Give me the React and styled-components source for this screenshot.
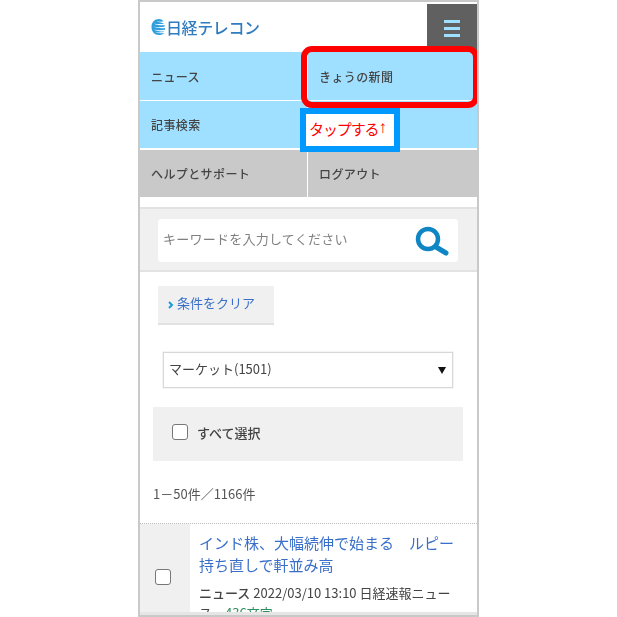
import React from "react";
import styled, { createGlobalStyle } from "styled-components";

const Global = createGlobalStyle`
  html, body { margin: 0; padding: 0; background: #fff; }
  body { font-family: "Noto Sans CJK JP", "Open Sans", sans-serif; overflow: hidden; height: 617px; }
  * { box-sizing: border-box; }
`;
const Phone = styled.div`
  position: relative; width: 341px; height: 617px; margin-left: 138px;
  border: 2px solid #c9c9c9; background: #fff; overflow: hidden;
`;
const Page = styled.div`filter: blur(0.4px); height: 100%;`;
const Header = styled.header`
  display: flex; justify-content: space-between; height: 50px; padding: 2px 0 0 11px;
`;
const Logo = styled.div`
  display: flex; align-items: center; gap: 1px; height: 48px; padding-bottom: 3px;
  color: #2f7cc0; font-size: 16px; font-weight: 500; letter-spacing: -0.4px;
`;
const MenuButton = styled.div`
  width: 50px; height: 48px; background: #606060; display: flex; flex-direction: column;
  justify-content: center; align-items: center; gap: 4px;
`;
const MenuBar = styled.span`width: 16px; height: 3px; background: #9fdfff;`;
const NavRow = styled.div`
  display: grid; grid-template-columns: 167px 1fr; height: ${p => p.$h}px; margin-bottom: ${p => p.$mb}px;
  gap: 1px; background: #fff;
`;
const NavCell = styled.div`
  background: ${p => (p.$gray ? "#c9c9c9" : "#9fdfff")}; color: #444; font-size: 12px; font-weight: 500;
  display: flex; align-items: center; padding-left: 11px; letter-spacing: 0.4px;
`;
const SearchBand = styled.div`
  margin-top: 10px; background: #f0f0f0; border-top: 2px solid #e2e2e2; border-bottom: 2px solid #e2e2e2;
  height: 65px; padding: 10px 18px 0 18px;
`;
const SearchBox = styled.div`
  width: 300px; height: 43px; background: #fff; border-radius: 4px; display: flex;
  align-items: center; justify-content: space-between; padding: 0 9px 0 5px;
  color: #808080; font-size: 13px; letter-spacing: 0.25px;
`;
const Lifted = styled.span`transform: translateY(-2px);`;
const Clear = styled.div`
  margin: 14px 0 0 18px; width: 116px; height: 39px; background: #f0f0f0; border-bottom: 2px solid #e2e2e2;
  display: flex; align-items: center; gap: 3px; padding-left: 10px; color: #3a6fc9; font-size: 13px;
`;
const Select = styled.div`
  margin: 27px 0 0 23px; width: 290px; height: 36px; border: 1px solid #d8d8d8; box-shadow: 0 0 0 0.5px #e8e8e8;
  display: flex; align-items: center; justify-content: space-between; padding: 0 6px 0 5px;
  color: #444; font-size: 13px;
`;
const Arrow = styled.span`
  width: 0; height: 0; border-left: 4px solid transparent; border-right: 4px solid transparent; border-top: 7px solid #111;
`;
const SelectAll = styled.div`
  margin: 19px 0 0 13px; width: 310px; height: 54px; background: #f0f0f0; display: flex; align-items: center;
  gap: 9px; padding: 0 0 4px 19px; color: #444; font-size: 13px; font-weight: 500;
`;
const Box = styled.span`
  width: 16px; height: 16px; border: 1px solid #777; border-radius: 3px; background: #fff; flex: none;
`;
const Count = styled.div`margin: 23px 0 0 13px; height: 39px; line-height: 20px; color: #555; font-size: 13px;`;
const Article = styled.article`
  display: grid; grid-template-columns: 50px 1fr; height: 89px; border-top: 1px dotted #bbb; overflow: hidden;
`;
const CheckCol = styled.div`
  background: #f0f0f0; display: flex; align-items: center; justify-content: center; padding: 6px 4px 0 0;
`;
const Body = styled.div`padding: 8px 18px 0 9px;`;
const Title = styled.div`color: #3a6fc9; font-size: 15px; line-height: 22px;`;
const Meta = styled.div`margin-top: 7px; color: #444; font-size: 13px; line-height: 20px;`;
const Strong = styled.b`font-weight: 500;`;
const Green = styled.span`color: #2f8f5f;`;
const BottomBar = styled.div`height: 3px; background: #e6e6e6;`;
const RedBox = styled.div`
  position: absolute; left: 161px; top: 44px; width: 178px; height: 62px; border: 6px solid #f00; border-radius: 11px;
`;
const TapNote = styled.div`
  position: absolute; left: 160px; top: 106px; width: 100px; height: 44px; border: 6px solid #0099ff; background: #fff;
  color: #f00; font-size: 15px; display: flex; align-items: center; padding: 0 0 4px 3px; letter-spacing: -1.1px;
  white-space: nowrap;
`;
const UpArrow = styled.span`font-family: "Liberation Sans", sans-serif; font-size: 17px; letter-spacing: 0;`;

const Globe = () => (
  <svg width="14" height="18" viewBox="0 0 14 18">
    <path d="M8 1C3.500 1 .5 4.500 .5 9s3 8 7.500 8c2 0 4-.6 5.500-1.800C10 15.500 6 15 4 14c3 .6 7 .6 9.500-.5-3.500.2-8-.3-10.500-1.700 3.500.6 7.500.6 11 0V10c-4 .5-8.500 0-11.500-1.200 3.500.5 7.500.5 11-.1V7c-3.500.5-7.500 0-10.500-1.300 3.500.5 7 .5 10 0-1.500-1-5-1.200-7.500-2.200 2.500.2 5 .2 7 0C11.500 1.800 9.800 1 8 1z" fill="#2f9fdc" />
  </svg>
);
const SearchIcon = () => (
  <svg width="34" height="30" viewBox="0 0 34 30" fill="none" stroke="#0e86c4">
    <circle cx="13" cy="13" r="10" strokeWidth="4.5" />
    <path d="M21 21l10 6" strokeWidth="5" strokeLinecap="round" />
  </svg>
);
const Chevron = () => (
  <svg width="6" height="8" viewBox="0 0 6 8" fill="none" stroke="#1a9ad6" strokeWidth="2">
    <path d="M1 1l3 3-3 3" />
  </svg>
);

export default function App() {
  return (
    <>
      <Global />
      <Phone>
        <Page>
          <Header>
            <Logo><Globe />日経テレコン</Logo>
            <MenuButton><MenuBar /><MenuBar /><MenuBar /></MenuButton>
          </Header>
          <NavRow $h={48} $mb={1}><NavCell>ニュース</NavCell><NavCell>きょうの新聞</NavCell></NavRow>
          <NavRow $h={47} $mb={2}><NavCell>記事検索</NavCell><NavCell /></NavRow>
          <NavRow $h={47} $mb={0}><NavCell $gray>ヘルプとサポート</NavCell><NavCell $gray>ログアウト</NavCell></NavRow>
          <SearchBand>
            <SearchBox><Lifted>キーワードを入力してください</Lifted><SearchIcon /></SearchBox>
          </SearchBand>
          <Clear><Chevron /><Lifted>条件をクリア</Lifted></Clear>
          <Select><Lifted>マーケット(1501)</Lifted><Arrow /></Select>
          <SelectAll><Box />すべて選択</SelectAll>
          <Count>1－50件／1166件</Count>
          <Article>
            <CheckCol><Box /></CheckCol>
            <Body>
              <Title>インド株、大幅続伸で始まる　ルピー持ち直しで軒並み高</Title>
              <Meta><Strong>ニュース</Strong> 2022/03/10 13:10 日経速報ニュース　<Green>436文字</Green></Meta>
            </Body>
          </Article>
          <BottomBar />
        </Page>
        <RedBox />
        <TapNote>タップする<UpArrow>↑</UpArrow></TapNote>
      </Phone>
    </>
  );
}
